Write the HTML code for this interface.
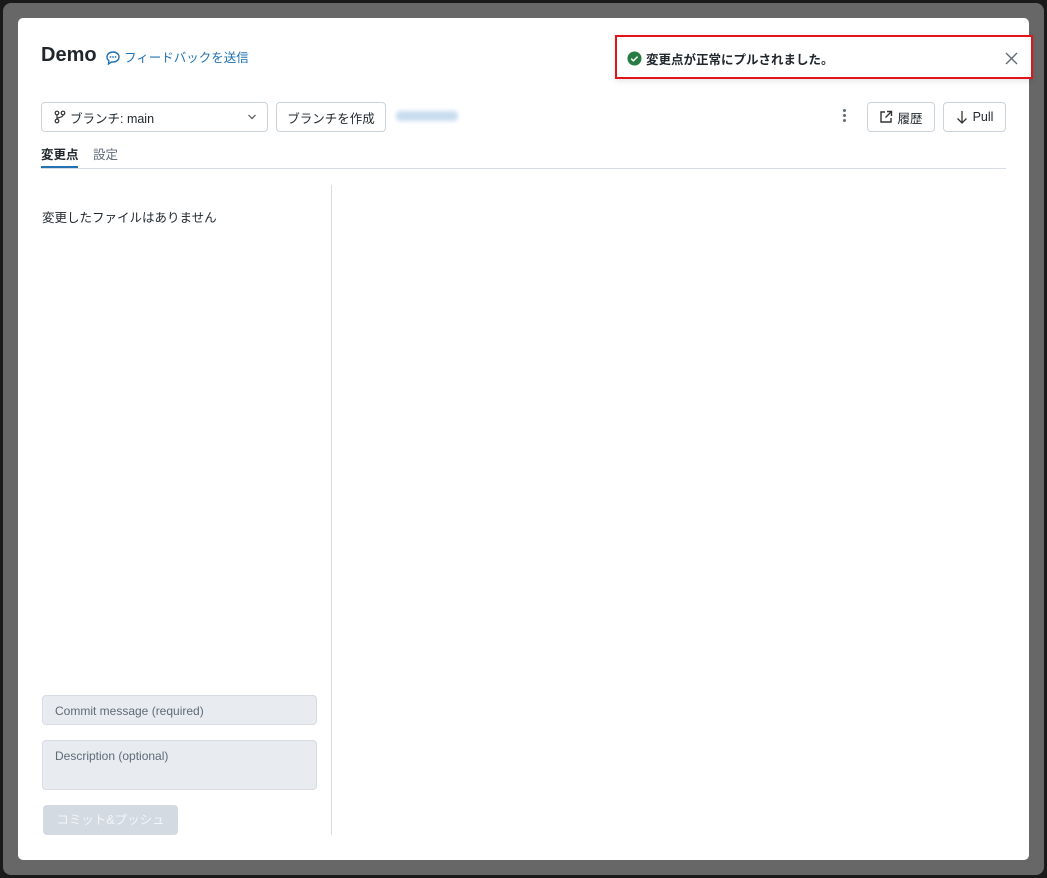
<!DOCTYPE html>
<html><head><meta charset="utf-8"><style>
*{box-sizing:border-box;margin:0;padding:0}
body{width:1047px;height:878px;background:#1a1a1a;font-family:"Liberation Sans","Noto Sans CJK JP",sans-serif;position:relative;overflow:hidden;color:#1f272d}
.bg{position:absolute;left:3px;top:3px;right:3px;bottom:3px;background:#676767;border-radius:8px}
.modal{position:absolute;left:18px;top:18px;width:1011px;height:842px;background:#fff;border-radius:5px}
.abs{position:absolute;line-height:1.3}
.btn{position:absolute;border:1px solid #cbd2d9;border-radius:4px;background:#fff;font-size:12.5px;display:flex;align-items:center;justify-content:center;height:30px;top:102px}
.inp{position:absolute;left:42px;width:275px;background:#e8ebef;border:1px solid #d6dce2;border-radius:4px;font-size:12px;color:#5f6b78;padding:0 12px}
</style></head><body>
<div class="bg"></div>
<div class="modal"></div>
<div class="abs" style="left:41px;top:42px;font-size:20px;font-weight:600;color:#1f272d">Demo</div>
<svg class="abs" style="left:105px;top:50px" width="16" height="16" viewBox="0 0 16 16"><path d="M8 2C4.5 2 2 4.2 2 7c0 1.5.7 2.8 1.9 3.7L3.5 14l3.2-2.1c.4.1.9.1 1.3.1 3.5 0 6-2.2 6-5S11.5 2 8 2z" fill="none" stroke="#2272b4" stroke-width="1.4"/><circle cx="5.5" cy="7" r=".9" fill="#2272b4"/><circle cx="8" cy="7" r=".9" fill="#2272b4"/><circle cx="10.5" cy="7" r=".9" fill="#2272b4"/></svg>
<div class="abs" style="left:124px;top:50px;font-size:12.5px;color:#2272b4">フィードバックを送信</div>

<div class="btn" style="left:41px;width:227px;justify-content:flex-start;padding-left:12px">
<svg width="12" height="14" viewBox="0 0 12 14"><circle cx="3" cy="3" r="1.8" fill="none" stroke="#333" stroke-width="1.2"/><circle cx="9" cy="3" r="1.8" fill="none" stroke="#333" stroke-width="1.2"/><circle cx="3" cy="11" r="1.8" fill="none" stroke="#333" stroke-width="1.2"/><path d="M3 5v4M9 5c0 3-6 2-6 4" fill="none" stroke="#333" stroke-width="1.2"/></svg>
<span style="margin-left:4px">ブランチ: main</span>
<svg style="position:absolute;right:10px" width="10" height="6" viewBox="0 0 10 6"><path d="M1.5 1l3.5 3.5L8.5 1" fill="none" stroke="#555" stroke-width="1.2"/></svg></div>
<div class="btn" style="left:276px;width:110px">ブランチを作成</div>
<div class="abs" style="left:396px;top:111px;width:62px;height:10px;background:#c8dcef;border-radius:4px;filter:blur(2px)"></div>

<div class="abs" style="left:843px;top:109px;width:3px"><div style="width:3px;height:3px;background:#5f6b78;border-radius:50%;margin-bottom:2px"></div><div style="width:3px;height:3px;background:#5f6b78;border-radius:50%;margin-bottom:2px"></div><div style="width:3px;height:3px;background:#5f6b78;border-radius:50%"></div></div>
<div class="btn" style="left:867px;width:68px"><svg width="14" height="14" viewBox="0 0 14 14"><path d="M6 2H2v10h10V8M8 1.5h4.5V6M12.5 1.5L6.5 7.5" fill="none" stroke="#333" stroke-width="1.4"/></svg><span style="margin-left:4px">履歴</span></div>
<div class="btn" style="left:943px;width:63px"><svg width="12" height="14" viewBox="0 0 12 14"><path d="M6 1v12M1.5 8.5L6 13l4.5-4.5" fill="none" stroke="#333" stroke-width="1.3"/></svg><span style="margin-left:5px">Pull</span></div>

<div class="abs" style="left:41px;top:147px;font-size:12.5px;font-weight:700">変更点</div>
<div class="abs" style="left:93px;top:147px;font-size:12.5px;color:#5f6b78">設定</div>
<div class="abs" style="left:41px;top:166px;width:37px;height:3px;background:#2272b4"></div>
<div class="abs" style="left:41px;top:168px;width:965px;height:1px;background:#d6dce2"></div>

<div class="abs" style="left:42px;top:210px;font-size:12.5px">変更したファイルはありません</div>
<div class="abs" style="left:331px;top:185px;width:1px;height:650px;background:#d6dce2"></div>

<div class="inp" style="top:695px;height:30px;line-height:30px">Commit message (required)</div>
<div class="inp" style="top:740px;height:50px;padding-top:8px">Description (optional)</div>
<div class="abs" style="left:43px;top:805px;width:135px;height:30px;background:#d3dae1;border-radius:4px;color:#f4f6f8;font-size:12.5px;text-align:center;line-height:30px">コミット&amp;プッシュ</div>

<div class="abs" style="left:615px;top:35px;width:418px;height:44px;background:#fff;border:2px solid #e3131b;box-shadow:0 2px 6px rgba(0,0,0,.1)"></div>
<svg class="abs" style="left:627px;top:51px" width="15" height="15" viewBox="0 0 16 16"><circle cx="8" cy="8" r="7.5" fill="#277c43"/><path d="M4.5 8.2l2.3 2.3 4.5-4.5" fill="none" stroke="#fff" stroke-width="1.6"/></svg>
<div class="abs" style="left:646px;top:52px;font-size:12.5px;font-weight:600">変更点が正常にプルされました。</div>
<svg class="abs" style="left:1005px;top:52px" width="13" height="13" viewBox="0 0 13 13"><path d="M1 1l11 11M12 1L1 12" stroke="#5f6b78" stroke-width="1.4"/></svg>
</body></html>
